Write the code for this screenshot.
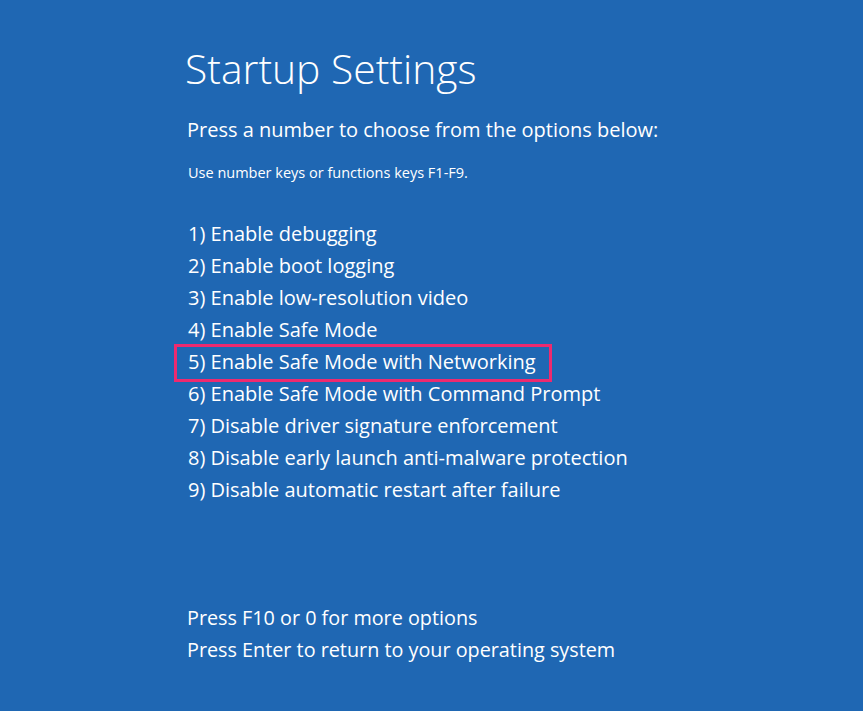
const options = [
  "1) Enable debugging",
  "2) Enable boot logging",
  "3) Enable low-resolution video",
  "4) Enable Safe Mode",
  "5) Enable Safe Mode with Networking",
  "6) Enable Safe Mode with Command Prompt",
  "7) Disable driver signature enforcement",
  "8) Disable early launch anti-malware protection",
  "9) Disable automatic restart after failure",
];

export default function App() {
  return (
    <div
      className="h-[711px] w-[863px] overflow-hidden bg-[#1f67b3] text-white"
      style={{ fontFamily: '"Open Sans", "Noto Sans", sans-serif' }}
    >
      <div className="pl-[185px] pt-[40px]">
        <h1 className="h-[56px] text-[40.8px] font-light leading-[56px]">Startup Settings</h1>
        <p className="mt-[20px] pl-[2px] text-[20px] leading-[28px]">
          Press a number to choose from the options below:
        </p>
        <p className="mt-[19px] pl-[3px] text-[14.5px] leading-[20px]">
          Use number keys or functions keys F1-F9.
        </p>
        <ul className="mt-[35px] pl-[3px]">
          {options.map((o, i) => (
            <li key={o} className="flow-root h-[32px] text-[20px] leading-[32px]">
              {i === 4 ? (
                <div className="-ml-[14px] -mt-[2px] h-[38px] w-[378px] border-[3px] border-[#ee2a6f] pl-[11px] leading-[30px]">
                  {o}
                </div>
              ) : (
                o
              )}
            </li>
          ))}
        </ul>
        <div className="mt-[96px] pl-[2px] text-[19.8px] leading-[32px]">
          <p>Press F10 or 0 for more options</p>
          <p>Press Enter to return to your operating system</p>
        </div>
      </div>
    </div>
  );
}
